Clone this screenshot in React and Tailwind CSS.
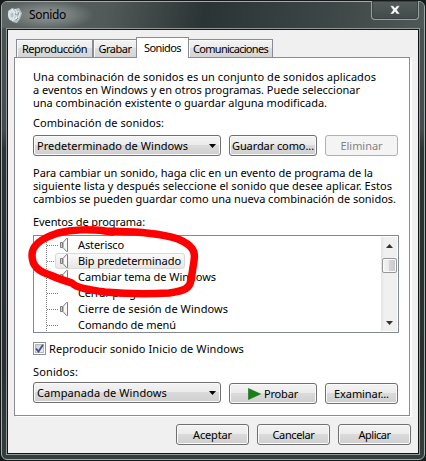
import { useLayoutEffect, useRef, useState } from 'react';

// A single line of text whose tracking is computed so that it spans `w` pixels.
function Line({ w, children, className = '' }) {
  const ref = useRef(null);
  const [spacing, setSpacing] = useState(0);
  useLayoutEffect(() => {
    const natural = ref.current.getBoundingClientRect().width;
    setSpacing((w - natural) / children.length);
  }, []);
  return (
    <span ref={ref} className={`inline-block shrink-0 whitespace-pre ${className}`} style={{ letterSpacing: `${spacing}px` }}>
      {children}
    </span>
  );
}

const face = 'bg-[linear-gradient(#f3f3f3_0%,#ebebeb_49%,#dadada_50%,#cfcfcf_100%)]';

function Button({ className = '', disabled, children }) {
  return (
    <button
      className={`flex h-[21px] shrink-0 items-center justify-center rounded-[3px] border leading-[13px] ${
        disabled ? 'border-[#adb2b5] bg-[#f4f4f4] text-[#838383]' : `border-[#707070] shadow-[inset_0_0_0_1px_#fafafa] ${face}`
      } ${className}`}
    >
      {children}
    </button>
  );
}

function Select({ w, children }) {
  return (
    <div className={`flex h-[21px] w-[188px] shrink-0 items-center justify-between rounded-[3px] border border-[#707070] pl-[3px] pr-1 leading-[13px] shadow-[inset_0_0_0_1px_#fafafa] ${face}`}>
      <Line w={w}>{children}</Line>
      <svg width="7" height="4" viewBox="0 0 7 4"><path d="M0 0h7L3.5 4z" /></svg>
    </div>
  );
}

function Speaker() {
  return (
    <svg width="8" height="14" viewBox="0 0 8 14" fill="#f8f8f8" stroke="#7c7c7c">
      <path d="M3 4.5l3.5-4h1v13h-1L3 9.500z" />
      <path d="M.5 4.500h2v5h-2z" fill="#d0d0d0" />
    </svg>
  );
}

const events = [
  ['Asterisco', 46, true],
  ['Bip predeterminado', 103, true],
  ['Cambiar tema de Windows', 138, true],
  ['Cerrar programa', 84, false],
  ['Cierre de sesión de Windows', 150, true],
  ['Comando de menú', 98, false],
];

function Tab({ className, w, children }) {
  return (
    <div className={`flex h-[18px] items-center justify-center border border-b-0 border-[#898c95] bg-[linear-gradient(#f3f3f3_0%,#ebebeb_49%,#dedede_50%,#d4d4d4_100%)] shadow-[inset_1px_1px_0_#fafafa] ${className}`}>
      <Line w={w}>{children}</Line>
    </div>
  );
}

export default function App() {
  return (
    <div className="h-[461px] w-[426px] overflow-hidden bg-[#161a1a] p-px font-['Noto_Sans','Open_Sans',sans-serif] text-[11px] leading-[13px] text-black">
      <div className="relative flex h-[459px] w-[424px] flex-col rounded-[6px] border border-[#a3aaa9] bg-[linear-gradient(#4b5353_0%,#444d4d_28%,#2c3534_32%,#29302f_80%,#343f3d_100%)] px-1">
        <header className="-mx-1 flex h-[26px] shrink-0 justify-between rounded-t-[5px] bg-[linear-gradient(100deg,#5d6464_0%,#515959_25%,#2b3434_48%,#3c4545_75%,#505757_100%)]">
          <div className="flex items-center gap-[6px] bg-[radial-gradient(ellipse_46px_15px_at_46px_13px,#939a99,#868d8ca0_55%,transparent)] pl-[5px] pr-8">
            <svg width="16" height="17" viewBox="0 0 16 17">
              <path d="M1 4l4-3 3 1 4-1 3 5-2 6-3 4-4-1-4-4-1-4z" fill="#b7c1c4" />
              <ellipse cx="4.500" cy="8" rx="3.500" ry="5.500" fill="#dce3e6" />
              <ellipse cx="5" cy="8" rx="1.500" ry="2.500" fill="#b3bfc4" />
              <path d="M8 2l2 3-1 4 1 4M11 4l2 3-2 4M5 2l3 4M5 14l4-3" stroke="#eef3f3" fill="none" />
              <path d="M8 7l2 1M11 11l-2 2M12 5l-1 3" stroke="#87949a" />
            </svg>
            <Line w={37} className="text-[12px] leading-[16px]">Sonido</Line>
          </div>
          <div className="mr-[5px] -mt-px flex h-[19px] w-[48px] items-center justify-center rounded-b-[4px] border border-t-0 border-[#9ba1a1] bg-[linear-gradient(#535b5b,#424b4b)] shadow-[inset_0_0_0_1px_#3b4342]">
            <svg width="12" height="10" viewBox="0 0 12 10">
              <path d="M1 .8h3.300L6 3l1.700-2.200H11L7.900 4.900 11 9H7.700L6 6.800 4.300 9H1l3.100-4.100z" fill="#f8f8f8" stroke="#39424a" strokeWidth=".4" />
            </svg>
          </div>
        </header>

        <div className="flex h-[427px] w-[414px] flex-col border border-[#929a99]">
          <div className="flex h-[425px] w-[412px] flex-col border border-[#111615] bg-[#f0f0f0] pl-[6px] pt-[7px]">
            <nav className="flex h-[20px] shrink-0 items-end pl-[2px]">
              <Tab className="w-[77px]" w={65}>Reproducción</Tab>
              <Tab className="w-[43px] border-r-0" w={33}>Grabar</Tab>
              <div className="z-10 -mb-px flex h-[21px] w-[53px] items-start justify-center border border-b-0 border-[#898c95] bg-white pt-[3px]">
                <Line w={37}>Sonidos</Line>
              </div>
              <Tab className="w-[84px] border-l-0" w={75}>Comunicaciones</Tab>
            </nav>

            <main className="flex h-[359px] w-[396px] shrink-0 flex-col border border-[#898c95] bg-white pl-[18px] shadow-[2px_1px_0_#fff]">
              <section className="mt-[12px] flex h-[39px] flex-col items-start">
                <Line w={343}>Una combinación de sonidos es un conjunto de sonidos aplicados</Line>
                <Line w={327}>a eventos en Windows y en otros programas. Puede seleccionar</Line>
                <Line w={294}>una combinación existente o guardar alguna modificada.</Line>
              </section>
              <label className="mt-[7px] h-[13px]"><Line w={131}>Combinación de sonidos:</Line></label>
              <div className="mt-[6px] flex gap-2">
                <Select w={151}>Predeterminado de Windows</Select>
                <Button className="w-[88px]"><Line w={82}>Guardar como...</Line></Button>
                <Button className="w-[73px]" disabled><Line w={42}>Eliminar</Line></Button>
              </div>
              <section className="mt-[10px] flex h-[39px] flex-col items-start">
                <Line w={340}>Para cambiar un sonido, haga clic en un evento de programa de la</Line>
                <Line w={359}>siguiente lista y después seleccione el sonido que desee aplicar. Estos</Line>
                <Line w={363}>cambios se pueden guardar como una nueva combinación de sonidos.</Line>
              </section>
              <label className="mt-[10px] h-[13px]"><Line w={112}>Eventos de programa:</Line></label>

              <div className="relative mt-[7px] h-[98px] w-[366px] shrink-0">
                <div className="flex h-full justify-between border border-[#828790] p-px">
                  <ul className="ml-[11px] h-[94px] w-[200px] border-l border-dotted border-[#808080]">
                    {events.map(([name, w, icon], i) => (
                      <li key={name} className="flex h-[16px] items-center">
                        <span className="mt-px w-[11px] border-t border-dotted border-[#808080]" />
                        <span className={`-ml-[3px] flex h-[16px] items-center rounded-[3px] border pr-[3px] ${i === 1 ? 'border-[#d9d9d9] bg-[linear-gradient(#fafafa,#e6e6e6)]' : 'border-transparent'}`}>
                          <span className="flex w-[22px] pl-[4px]">{icon && <Speaker />}</span>
                          <Line w={w} className="mb-[2px]">{name}</Line>
                        </span>
                      </li>
                    ))}
                  </ul>
                  <div className="flex h-[94px] w-[16px] flex-col items-center bg-[linear-gradient(90deg,#e3e3e3,#f0f0f0_20%,#f0f0f0)]">
                    <svg className="mt-[7px] shrink-0" width="7" height="4" viewBox="0 0 7 4"><path d="M0 4h7L3.500 0z" fill="#333" /></svg>
                    <div className="mt-[10px] h-[15px] w-[15px] shrink-0 rounded-[2px] border border-[#979797] bg-[linear-gradient(90deg,#f5f5f5_0%,#e9e9eb_48%,#d4d4d8_50%,#c7c7ca_100%)] shadow-[inset_0_0_0_1px_#fafafa]" />
                    <svg className="mt-auto mb-[6px] shrink-0" width="7" height="4" viewBox="0 0 7 4"><path d="M0 0h7L3.500 4z" fill="#333" /></svg>
                  </div>
                </div>
                <svg className="absolute -left-[7px] -top-[10px]" width="176" height="80" viewBox="26 225 176 80" fill="none" stroke="#fe0000" strokeWidth="7.500" strokeLinecap="round" strokeLinejoin="round">
                  <path d="M112 232C91 228 70 230 58 233C42 238 32 245 32 255C32 266 38 271 50 275C59 279 66 281 72 283C76 288 90 290 105 292C127 294 150 294 169 293C185 291 190 288 191 280L194 261C196 251 192 245 178 239C158 232 131 232 105 231" />
                </svg>
              </div>

              <label className="mt-[9px] flex h-[13px] items-center gap-[3px]">
                <span className="flex h-[13px] w-[13px] items-center justify-center border border-[#8e8f8f] bg-white">
                  <span className="flex h-[9px] w-[9px] border border-[#b5b9bf] bg-[linear-gradient(135deg,#cbcfd5,#f3f3f3)]">
                    <svg className="-ml-px -mt-px shrink-0" width="9" height="9" viewBox="0 0 9 9"><path d="M1 4.500l2.500 3L8 .8" fill="none" stroke="#3f5296" strokeWidth="1.900" /></svg>
                  </span>
                </span>
                <Line w={195}>Reproducir sonido Inicio de Windows</Line>
              </label>
              <label className="mt-[10px] h-[13px]"><Line w={45}>Sonidos:</Line></label>
              <div className="mt-[4px] flex gap-2">
                <Select w={130}>Campanada de Windows</Select>
                <Button className="mt-px w-[88px] gap-[3px]">
                  <svg width="13" height="12" viewBox="0 0 13 12"><path d="M.5.5v11L12.500 6z" fill="#178017" stroke="#106b12" strokeWidth=".6" /></svg>
                  <Line w={34}>Probar</Line>
                </Button>
                <Button className="mt-px w-[73px]"><Line w={55}>Examinar...</Line></Button>
              </div>
            </main>

            <footer className="mt-2 flex gap-2 pl-[162px]">
              <Button className="w-[73px]"><Line w={39}>Aceptar</Line></Button>
              <Button className="w-[73px]"><Line w={42}>Cancelar</Line></Button>
              <Button className="w-[73px]"><Line w={32}>Aplicar</Line></Button>
            </footer>
          </div>
        </div>
      </div>
    </div>
  );
}
